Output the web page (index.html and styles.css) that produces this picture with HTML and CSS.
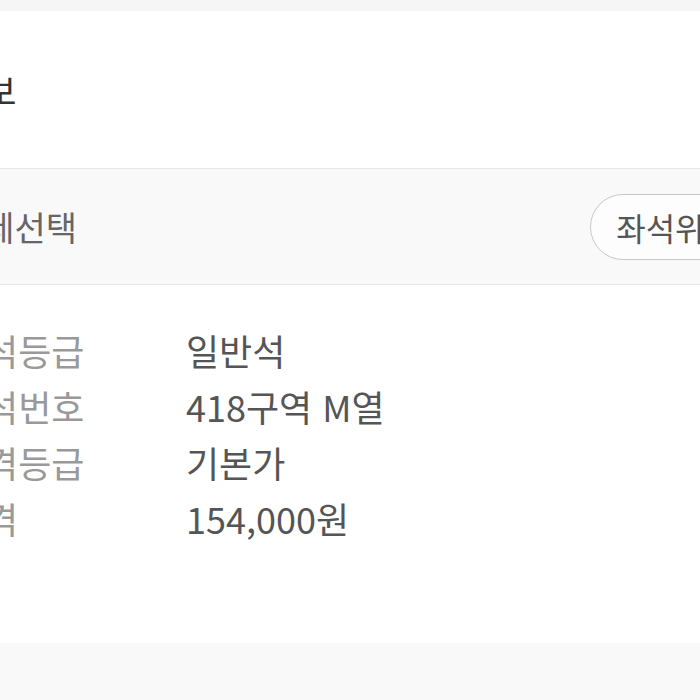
FILE: index.html
```html
<!DOCTYPE html>
<html lang="ko">
<head>
  <meta charset="UTF-8" />
  <meta name="viewport" content="width=device-width, initial-scale=1.0"/>
  <title>좌석정보</title>
  <link rel="stylesheet" href="styles.css">
</head>
<body>

<div class="page">
  <div class="top-strip"></div>

  <div class="title-bar">
    <h2>정보</h2>
  </div>

  <div class="select-bar">
    <span class="select-label">결제선택</span>
    <a href="#" class="seat-button">좌석위치</a>
  </div>

  <div class="info-list">
    <div class="info-row">
      <span class="label">좌석등급</span>
      <span class="value">일반석</span>
    </div>
    <div class="info-row">
      <span class="label">좌석번호</span>
      <span class="value">418구역 M열</span>
    </div>
    <div class="info-row">
      <span class="label">가격등급</span>
      <span class="value">기본가</span>
    </div>
    <div class="info-row">
      <span class="label">가격</span>
      <span class="value">154,000원</span>
    </div>
  </div>

  <div class="bottom-strip"></div>
</div>

</body>
</html>
```

FILE: styles.css
```css
* {
  box-sizing: border-box;
  margin: 0;
  padding: 0;
  font-family: 'Noto Sans CJK KR', 'Noto Sans', sans-serif;
}

body {
  background: #fff;
  overflow: hidden;
  width: 700px;
  height: 700px;
}

/* the page is wider than the view, so the left edge is cut off */
.page {
  margin-left: -48px;
  width: 830px;
}

.top-strip {
  height: 11px;
  background: #f6f6f6;
}

.title-bar {
  height: 157px;
  display: flex;
  align-items: center;
  background: #fff;
}

.title-bar h2 {
  font-size: 35px;
  font-weight: 400;
  color: #333;
}

.select-bar {
  height: 117px;
  display: flex;
  align-items: center;
  padding-right: 22px;
  background: #f9f9f9;
  border-top: 1px solid #e6e6e6;
  border-bottom: 1px solid #e6e6e6;
}

.select-label {
  font-size: 34px;
  color: #666;
}

.seat-button {
  margin-left: auto;
  height: 66px;
  padding: 0 25px;
  display: flex;
  align-items: center;
  font-size: 32px;
  color: #555;
  text-decoration: none;
  background: #fdfdfd;
  border: 1px solid #c8c8c8;
  border-radius: 33px;
}

.info-list {
  padding: 37px 0 97px;
  background: #fff;
}

.info-row {
  display: grid;
  grid-template-columns: 234px 1fr;
  line-height: 56px;
  font-size: 36px;
}

.info-row .label {
  color: #999;
}

.info-row .value {
  color: #555;
}

.bottom-strip {
  height: 60px;
  background: #f9f9f9;
}
```
